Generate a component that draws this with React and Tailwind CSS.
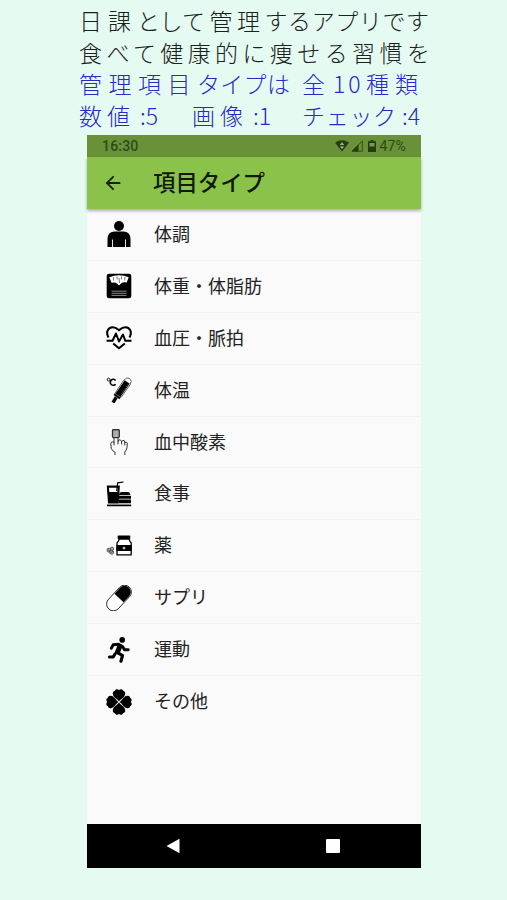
import { MdArrowBack } from 'react-icons/md';

const PersonIcon = () => (
  <svg viewBox="0 0 26 26" className="w-[26px] h-[26px]">
    <circle cx="13" cy="5" r="5" />
    <path d="M1.5 26V18Q1.5 11 8 10.5H18Q24.5 11 24.5 18V26Z" />
    <path d="M6.5 18.5V26M19.5 18.5V26" stroke="#fff" strokeWidth="0.9" />
  </svg>
);

const ScaleIcon = () => (
  <svg viewBox="0 0 26 26" className="w-[26px] h-[26px]">
    <rect x="0.7" y="0.7" width="24.6" height="24.6" rx="2.4" />
    <path d="M3.3 4.2Q13 0.5 22.7 4.2L20.7 9.5Q17 8.8 15 10.5L13 12.5L11 10.5Q9 8.8 5.6 9.8Z" fill="#fff" />
    <path d="M7.5 4V7.5M11 3.4V6.5M15.4 3.4V6.5M18.8 4V7.5M13 5L13.5 10" stroke="#555" strokeWidth="0.8" />
    <path d="M5.5 18.2H20.5M5.5 20.3H20.5M5.5 22.4H20.5" stroke="#aaa" strokeWidth="0.8" />
  </svg>
);

const HeartIcon = () => (
  <svg viewBox="0 0 26 26" className="w-[26px] h-[26px]" fill="none" stroke="#000" strokeWidth="2.1" strokeLinejoin="round">
    <path d="M2.5 12.5C-0.5 7 2 2.4 6.5 2.2C10 2.1 11.5 4 13 5.3C14.5 4 16 2.1 19.5 2.2C24 2.4 26.5 7 23.5 12.5" />
    <path d="M0.5 15.8H6.5L10 8.5L13 16.5L17 9.5L19.3 15.8H25.5" strokeWidth="2" />
    <path d="M7.2 18.5L13 23.3L18.8 18.5" />
  </svg>
);

const ThermometerIcon = () => (
  <svg viewBox="0 0 26 26" className="w-[26px] h-[26px]">
    <circle cx="2.6" cy="2.6" r="1.4" fill="none" stroke="#000" strokeWidth="0.9" />
    <path d="M9.6 3.4A3 3 0 1 0 9.6 7.2" fill="none" stroke="#000" strokeWidth="1.6" />
    <path d="M8.8 16.5L17.8 3Q20.8 -0.3 23.8 1.5Q26.4 3.8 24.2 7.5L15 20.5Z" fill="#fff" stroke="#444" strokeWidth="0.8" />
    <path d="M12 18.2L21.2 5" stroke="#000" strokeWidth="6" />
    <path d="M15.2 17.2L22.4 7" stroke="#999" strokeWidth="0.8" strokeDasharray="1 1.2" />
    <path d="M10.3 20.2L7 25.6" stroke="#000" strokeWidth="3.4" />
    <path d="M8.2 17.2L14 21.5" stroke="#000" strokeWidth="1.8" />
  </svg>
);

const FingerIcon = () => (
  <svg viewBox="0 0 26 26" className="w-[26px] h-[26px]" fill="none" stroke="#333" strokeWidth="1" strokeLinecap="round">
    <rect x="6.5" y="0.6" width="6.8" height="8" rx="1" fill="#999" strokeWidth="1.3" />
    <path d="M8 3H12M8 5H12M8 7H12" stroke="#ddd" strokeWidth="0.6" />
    <path d="M8 9V16M12 9V15M12 12.5Q12.4 10.3 14.2 10.8Q16 11.3 15.7 15M15.7 12.5Q16.5 10.6 18.2 11.6Q19.2 12.5 18.8 16M18.8 13.5Q20.3 12.3 21.3 14L21 18.5Q20.5 21.5 18.8 23V26M8 13Q4.5 12.5 4.8 15L5.3 19.5Q6.2 22 9 23.2V26" />
  </svg>
);

const MealIcon = () => (
  <svg viewBox="0 0 26 26" className="w-[26px] h-[26px]">
    <path d="M1.4 5.2H13.2L12.2 22H2.6Z" stroke="#000" strokeWidth="1.2" />
    <path d="M3 6.8H11.6L11.3 11H3.3Z" fill="#fff" />
    <path d="M10.7 10L11.7 1.8L17.5 1" fill="none" stroke="#000" strokeWidth="1.2" />
    <path d="M13 14.2Q13.2 11 16 11H21.5Q24.2 11 24.5 14.2Z" />
    <path d="M13 15H25V17.8H13ZM13 18.6H25V22.2H13Z" />
    <path d="M1 24.4H25.2" stroke="#000" strokeWidth="1.7" />
  </svg>
);

const MedicineIcon = () => (
  <svg viewBox="0 0 26 26" className="w-[26px] h-[26px]">
    <rect x="11.7" y="2.4" width="12.6" height="3.6" rx="0.7" />
    <path d="M13 6.2Q13.2 8 11 10V21.8H25.2V10Q23.2 8 23.2 6.2Z" fill="#fff" stroke="#000" strokeWidth="1.3" />
    <rect x="10.4" y="12" width="15.4" height="6" />
    <path d="M18 13.8V16.4M16.7 15.1H19.3" stroke="#fff" strokeWidth="1" />
    <g fill="#aaa" stroke="#333" strokeWidth="0.7">
      <circle cx="3" cy="17.2" r="2" />
      <circle cx="6" cy="15.8" r="1.7" />
      <circle cx="5.7" cy="19.3" r="2" />
      <path d="M1.8 16.2L4 18.5M4.5 20L7 18.3" />
    </g>
  </svg>
);

const CapsuleIcon = () => (
  <svg viewBox="0 0 26 26" className="w-[26px] h-[26px]">
    <g transform="rotate(-47 13 13)">
      <rect x="-2" y="6.2" width="30" height="13.6" rx="6.8" fill="#fff" stroke="#222" strokeWidth="0.9" />
      <path d="M13 6.8H21.2A6.2 6.2 0 0 1 21.2 19.2H13Z" />
    </g>
  </svg>
);

const RunIcon = () => (
  <svg viewBox="0 0 26 26" className="w-[26px] h-[26px]" fill="none" stroke="#000" strokeLinecap="round" strokeLinejoin="round">
    <circle cx="16.2" cy="2.9" r="2.8" fill="#000" stroke="none" />
    <path d="M5.3 11.2L7.2 7.8L12.5 7.2L16.8 9.8L18.5 12.8L22.3 12.8" strokeWidth="2.9" />
    <path d="M13.8 9.5L11.5 15" strokeWidth="5" />
    <path d="M11.5 15.5L16.5 18.6L15 24.2" strokeWidth="3.2" />
    <path d="M8.8 17.2L7.2 20L3.4 20" strokeWidth="3.1" />
  </svg>
);

const leaf = 'M13 12.4C11.5 10 7 8.3 6.8 4.7C6.6 2.8 7.8 1.8 9 1.8C9.2 0.2 12 -0.3 13 1.3C14 -0.3 16.8 0.2 17 1.8C18.2 1.8 19.4 2.8 19.2 4.7C19 8.3 14.5 10 13 12.4Z';

const CloverIcon = () => (
  <svg viewBox="0 0 26 26" className="w-[26px] h-[26px]">
    {[0, 90, 180, 270].map((r) => (
      <path key={r} d={leaf} transform={`rotate(${r} 13 13)`} />
    ))}
  </svg>
);

const items = [
  { name: '体調', Icon: PersonIcon },
  { name: '体重・体脂肪', Icon: ScaleIcon },
  { name: '血圧・脈拍', Icon: HeartIcon },
  { name: '体温', Icon: ThermometerIcon },
  { name: '血中酸素', Icon: FingerIcon },
  { name: '食事', Icon: MealIcon },
  { name: '薬', Icon: MedicineIcon },
  { name: 'サプリ', Icon: CapsuleIcon },
  { name: '運動', Icon: RunIcon },
  { name: 'その他', Icon: CloverIcon },
];

const Headline = () => (
  <div className="h-[135px] pl-[79px] pt-[5px] text-[23px] leading-[31.7px] font-light whitespace-pre text-[#17211d]">
    <p>
      <span className="tracking-[6px]">日課</span>
      <span className="-tracking-[0.5px]">とし</span>
      <span className="tracking-[4.5px]">て管理</span>
      <span className="tracking-[0.6px]">するアプリで</span>す
    </p>
    <p className="tracking-[4.4px]">食べて健康的に痩せる習慣を</p>
    <p className="text-[#2a28c6]">
      <span className="inline-block w-[223px]">
        <span className="tracking-[6.5px]">管理項目</span>
        <span className="tracking-[0.3px]">タイプは</span>
      </span>
      <span className="inline-block w-[31px]">全</span>
      <span className="inline-block w-[33px] tracking-[3px]">10</span>
      <span className="tracking-[6px]">種類</span>
    </p>
    <p className="text-[#2a28c6]">
      <span className="inline-block w-[113px]"><span className="tracking-[5px]">数値</span> :5</span>
      <span className="inline-block w-[110px]"><span className="tracking-[5px]">画像</span> :1</span>
      <span className="tracking-[0.7px]">チェック</span> :4
    </p>
  </div>
);

const StatusBar = () => (
  <div className="h-[22px] bg-[#699138] pl-[15px] pr-[14px] flex items-center justify-between font-[Roboto,sans-serif] text-[14px] text-[#2d4b17]">
    <span className="font-medium tracking-[0.2px]">16:30</span>
    <div className="flex items-center">
      <svg viewBox="0 0 14 12" className="w-[14px] h-[12px]">
        <path d="M0 2.7Q7-2.2 14 2.7L7 11.5Z" fill="#243d14" />
        <path d="M7 2.2L9.2 5H4.8ZM7 9L4.8 6.4H9.2Z" fill="#a9ba95" />
      </svg>
      <svg viewBox="0 0 12 12" className="ml-[2px] w-[12px] h-[12px]">
        <path d="M11.3 1V11.2H1Z" fill="none" stroke="#315019" strokeWidth="1" />
        <path d="M7.5 4.5V11.5H0.5Z" fill="#243d14" />
      </svg>
      <svg viewBox="0 0 8 12" className="ml-[5px] w-[8px] h-[12px]">
        <path d="M2.5 0H5.5V1.3H8V12H0V1.3H2.5Z" fill="#243d14" />
        <path d="M1.5 3H6.5V6.5H1.5Z" fill="#79994e" />
      </svg>
      <span className="ml-[3px] mr-px tracking-[0.2px]">47%</span>
    </div>
  </div>
);

const NavBar = () => (
  <div className="h-[44px] bg-black flex items-center pl-[79px]">
    <svg viewBox="0 0 14 16" className="w-[14px] h-[16px] fill-white">
      <path d="M13.5 0.7V15.3L0.5 8Z" />
    </svg>
    <div className="ml-[146px] w-[14px] h-[14px] rounded-[1px] bg-white" />
  </div>
);

export default function App() {
  return (
    <div className="w-[507px] h-[900px] overflow-hidden bg-[#e5fbf1] font-['Noto_Sans_CJK_JP',sans-serif]">
      <Headline />
      <div className="ml-[87px] w-[334px] h-[733px] flex flex-col bg-[#fafafa]">
        <StatusBar />
        <header className="h-[52px] shrink-0 bg-[#8bc34a] flex items-center pl-[15px] shadow-[0_2px_3px_rgba(0,0,0,0.3)]">
          <MdArrowBack className="w-[22px] h-[22px] text-[#142008]" />
          <h1 className="ml-[29px] -mt-[5px] text-[22.4px] leading-[30px] font-medium text-[#101a06]">項目タイプ</h1>
        </header>
        <ul className="flex-1">
          {items.map(({ name, Icon }) => (
            <li key={name} className="h-[51.9px] border-b border-[#f3f3f3] last:border-b-0 flex items-center pl-[19px] text-[18px] leading-[26px] text-[#222]">
              <Icon />
              <span className="ml-[22px] -mt-[3px]">{name}</span>
            </li>
          ))}
        </ul>
        <NavBar />
      </div>
    </div>
  );
}
